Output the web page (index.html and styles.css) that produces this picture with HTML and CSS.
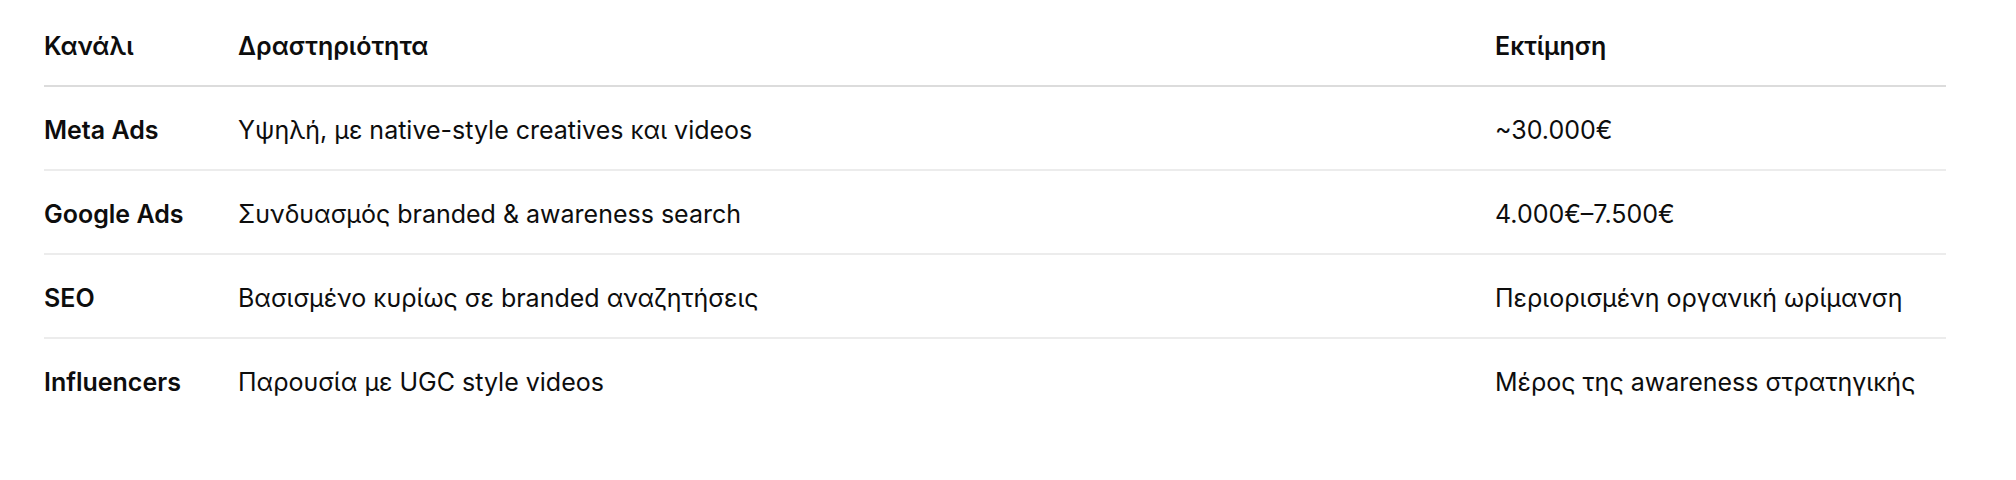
FILE: index.html
```html
<!DOCTYPE html>
<html lang="el">
<head>
<meta charset="utf-8">
<title>Κανάλια</title>
<link rel="stylesheet" href="styles.css">
</head>
<body>
<div class="wrap">
  <table class="plan">
    <colgroup>
      <col class="c1">
      <col class="c2">
      <col class="c3">
    </colgroup>
    <thead>
      <tr>
        <th>Κανάλι</th>
        <th>Δραστηριότητα</th>
        <th>Εκτίμηση</th>
      </tr>
    </thead>
    <tbody>
      <tr>
        <td class="name">Meta Ads</td>
        <td>Υψηλή, με native-style creatives και videos</td>
        <td>~30.000€</td>
      </tr>
      <tr>
        <td class="name">Google Ads</td>
        <td>Συνδυασμός branded &amp; awareness search</td>
        <td>4.000€–7.500€</td>
      </tr>
      <tr>
        <td class="name">SEO</td>
        <td>Βασισμένο κυρίως σε branded αναζητήσεις</td>
        <td>Περιορισμένη οργανική ωρίμανση</td>
      </tr>
      <tr>
        <td class="name">Influencers</td>
        <td>Παρουσία με UGC style videos</td>
        <td>Μέρος της awareness στρατηγικής</td>
      </tr>
    </tbody>
  </table>
</div>
</body>
</html>
```

FILE: styles.css
```css
html, body {
  margin: 0;
  padding: 0;
  background: #ffffff;
}
body {
  font-family: "Inter", "Noto Sans", sans-serif;
  color: #0d0d0d;
}
.wrap {
  padding: 5px 70px 0 44px;
}
.plan {
  width: 100%;
  border-collapse: collapse;
  table-layout: fixed;
  font-size: 25px;
}
.c1 { width: 194px; }
.c3 { width: 451px; }
.plan th {
  text-align: left;
  font-weight: 600;
  height: 78px;
  padding: 2px 0 0;
  vertical-align: middle;
  border-bottom: 2px solid #dcdcdc;
}
.plan td {
  height: 79px;
  padding: 3px 0 0;
  vertical-align: middle;
  border-bottom: 2px solid #ececec;
  white-space: nowrap;
}
.plan tbody tr:last-child td {
  border-bottom: none;
}
.plan td.name {
  font-weight: 600;
}
```
